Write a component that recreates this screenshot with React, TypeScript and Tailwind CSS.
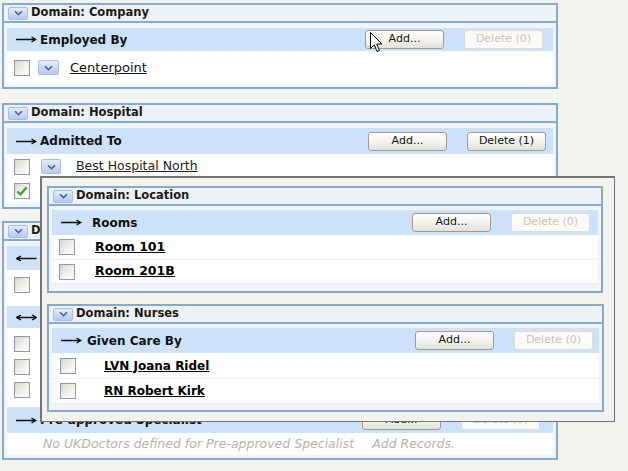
import type { ReactNode } from 'react'

function Chevron() {
  return (
    <svg width="9" height="6" viewBox="0 0 9 6">
      <path d="M1 1.2 4.5 4.6 8 1.2" fill="none" stroke="#4d638c" strokeWidth="1.6" />
    </svg>
  )
}

function DropBtn({ className = '' }: { className?: string }) {
  return (
    <span
      className={`inline-flex h-[13px] w-[20px] shrink-0 items-center justify-center rounded-[2px] border border-[#a9bde3] bg-linear-to-b from-[#e4ecfa] to-[#b7c9ee] ${className}`}
    >
      <Chevron />
    </span>
  )
}

function Check({ checked = false }: { checked?: boolean }) {
  return (
    <span className="flex h-[16px] w-[16px] shrink-0 items-center justify-center border border-[#8e9aa6] bg-linear-to-br from-[#d5d4cd] via-[#efeeea] to-white">
      {checked && (
        <svg width="12" height="11" viewBox="0 0 12 11">
          <path d="M1.5 5.5 4.5 8.5 10.5 1.5" fill="none" stroke="#2aa52a" strokeWidth="2.2" />
        </svg>
      )}
    </span>
  )
}

function Btn({ children, disabled = false }: { children: ReactNode; disabled?: boolean }) {
  return (
    <span
      className={`flex h-[19px] w-[79px] items-center justify-center rounded-[3px] border text-[11px] ${
        disabled
          ? 'border-[#e3dacf] bg-[#fbfaf8] text-[#cbc4bb]'
          : 'border-[#a39a8f] bg-linear-to-b from-white via-[#f5f4f1] to-[#e2dfd8] text-[#111]'
      }`}
    >
      {children}
    </span>
  )
}

function Arrow({ dir = 'right' }: { dir?: 'right' | 'left' | 'both' }) {
  const d =
    dir === 'right'
      ? 'M0 4.5H19.5M15.5 2 19.8 4.5 15.5 7'
      : dir === 'left'
        ? 'M1 4.5H20.5M5 2 .7 4.5 5 7'
        : 'M1 4.5H20M5 2 .7 4.5 5 7M16 2 20.3 4.5 16 7'
  return (
    <svg width="21" height="9" viewBox="0 0 21 9" className="shrink-0">
      <path d={d} fill="none" stroke="#111" strokeWidth="1.4" />
    </svg>
  )
}

function RelRow({
  label,
  dir = 'right',
  del = 'Delete (0)',
  delOn = false,
  className = '',
  gap = 'gap-[3px]',
}: {
  label?: string
  dir?: 'right' | 'left' | 'both'
  del?: string
  delOn?: boolean
  className?: string
  gap?: string
}) {
  return (
    <div className={`flex items-center bg-[#cde2f8] pl-[9px] ${className}`}>
      <div className={`flex flex-1 items-center ${gap} text-[12px] font-bold text-[#111]`}>
        <Arrow dir={dir} />
        {label && <span>{label}</span>}
      </div>
      <div className="flex items-center gap-[20px]">
        <Btn>Add...</Btn>
        <Btn disabled={!delOn}>{del}</Btn>
      </div>
    </div>
  )
}

function Panel({
  title,
  children,
  className = '',
  bodyClass = '',
}: {
  title: string
  children: ReactNode
  className?: string
  bodyClass?: string
}) {
  return (
    <div className={`w-[556px] shrink-0 border-2 border-[#84abcb] bg-[#eef1f6] ${className}`}>
      <div className="flex h-[16px] items-center gap-[3px] pl-[4px] text-[11.5px] font-bold text-[#1c1a17]">
        <DropBtn />
        <span>{title}</span>
      </div>
      <div className={`border-t-2 border-[#84abcb] bg-[#f1f4f8] px-[3px] ${bodyClass}`}>{children}</div>
    </div>
  )
}

function Cursor() {
  return (
    <svg width="13" height="21" viewBox="0 0 13 21" className="absolute left-[370px] top-[32px]">
      <path d="M.5.5V16.5L4.3 12.8 7 19.5 9.4 18.5 6.8 12H12Z" fill="#fff" stroke="#000" strokeWidth="1" />
    </svg>
  )
}

export default function App() {
  return (
    <div className="relative h-[471px] w-[628px] overflow-hidden bg-[#f4f2ee] font-['DejaVu_Sans',sans-serif]">
      <div className="flex flex-col pl-[2px] pt-[3px]">
        <Panel title="Domain: Company" bodyClass="pt-[5px] pb-[3px]">
          <RelRow label="Employed By" className="h-[23px] pr-[10px]" />
          <div className="flex h-[33px] items-center bg-white pl-[7px]">
            <Check />
            <DropBtn className="ml-[8px] h-[15px] w-[21px]" />
            <span className="ml-[11px] text-[13px] text-[#111] underline">Centerpoint</span>
          </div>
        </Panel>

        <Panel title="Domain: Hospital" className="mt-[14px]" bodyClass="pt-[5px] pb-[4px]">
          <RelRow label="Admitted To" del="Delete (1)" delOn className="h-[26px] pr-[7px]" />
          <div className="flex h-[25px] items-center bg-white pl-[7px]">
            <Check />
            <DropBtn className="ml-[11px] h-[15px] w-[20px]" />
            <span className="ml-[15px] text-[12.5px] text-[#222] underline">Best Hospital North</span>
          </div>
          <div className="flex h-[24px] items-center bg-white pl-[7px]">
            <Check checked />
          </div>
        </Panel>

        <Panel title="Domain: UKDoctors" className="mt-[12px]" bodyClass="pt-[5px] pb-[3px]">
          <RelRow dir="left" className="h-[24px] pr-[13px]" />
          <div className="flex h-[30px] items-center bg-white pl-[7px]">
            <Check />
          </div>
          <div className="h-[6px] bg-white" />
          <RelRow dir="both" className="h-[22px] pr-[13px]" />
          <div className="bg-white pt-[4px]">
            {[0, 1, 2].map((n) => (
              <div key={n} className="flex h-[23px] items-center pl-[7px]">
                <Check />
              </div>
            ))}
          </div>
          <div className="h-[6px] bg-white" />
          <RelRow label="Pre-approved Specialist" className="h-[26px] pr-[13px]" />
          <div className="flex h-[22px] items-center gap-[18px] bg-white pl-[36px] text-[12.5px] italic text-[#b4b1ad]">
            <span>No UKDoctors defined for Pre-approved Specialist</span>
            <span>Add Records.</span>
          </div>
        </Panel>
      </div>

      <Cursor />

      <div className="absolute left-[40px] top-[176px] flex h-[246px] w-[575px] flex-col border-b border-l-2 border-r border-t-2 border-[#747474] bg-[#f4f2ee] pl-[5px] pt-[8px]">
        <Panel title="Domain: Location" bodyClass="pt-[4px] pb-[7px]">
          <RelRow label="Rooms" gap="gap-[10px]" className="h-[25px] pr-[8px]" />
          {['Room 101', 'Room 201B'].map((r, i) => (
            <div
              key={r}
              className={`flex items-center border-b border-[#f7e9e9] bg-white pl-[7px] ${i === 0 ? 'h-[25px]' : 'h-[24px]'}`}
            >
              <Check />
              <span className="ml-[20px] text-[12.5px] font-bold text-black underline">{r}</span>
            </div>
          ))}
        </Panel>

        <Panel title="Domain: Nurses" className="mt-[11px] w-[557px]" bodyClass="pt-[4px] pb-[6px]">
          <RelRow label="Given Care By" gap="gap-[5px]" className="h-[25px] pr-[6px]" />
          {['LVN Joana Ridel', 'RN Robert Kirk'].map((n, i) => (
            <div
              key={n}
              className={`flex items-center border-b border-[#f7e9e9] bg-white pl-[8px] ${i === 0 ? 'h-[26px]' : 'h-[25px]'}`}
            >
              <Check />
              <span className="ml-[28px] text-[12px] font-bold text-black underline">{n}</span>
            </div>
          ))}
        </Panel>
      </div>
    </div>
  )
}
